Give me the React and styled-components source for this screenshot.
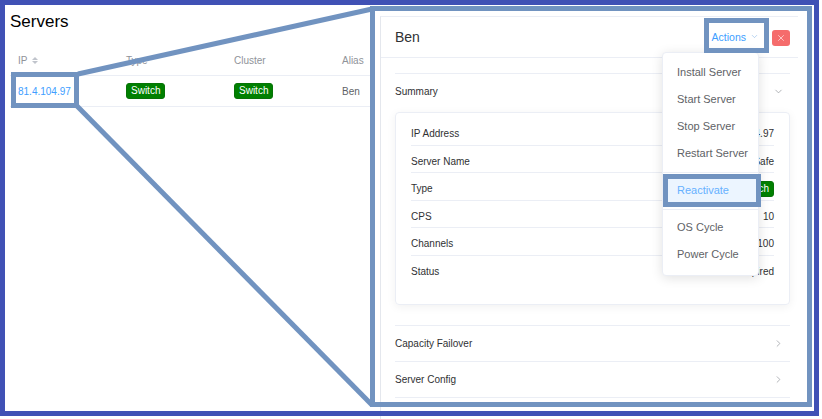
import React from 'react';
import styled, { createGlobalStyle } from 'styled-components';
import { ChevronDown, ChevronRight, X } from 'lucide-react';

const GlobalStyle = createGlobalStyle`
  html, body {
    margin: 0;
    padding: 0;
    background: #fff;
  }
  body {
    font-family: "Liberation Sans", Arial, sans-serif;
    color: #303133;
  }
`;

const Stage = styled.div`
  position: relative;
  width: 822px;
  height: 419px;
  overflow: hidden;
  background: #fff;
  display: flex;
`;

/* left page: server table */

const ListPane = styled.div`
  width: 370px;
  flex: none;
  overflow: hidden;
  padding: 12px 0 0 10px;
  box-sizing: border-box;
`;

const Title = styled.h2`
  margin: 0;
  font-size: 17px;
  line-height: 20px;
  font-weight: 400;
  color: #000;
`;

const Table = styled.div`
  margin-top: 13px;
  width: 440px;
`;

const TableRow = styled.div`
  display: grid;
  grid-template-columns: repeat(4, 108px);
  height: 30px;
  align-items: center;
  border-bottom: 1px solid #ebeef5;
  font-size: 10px;
  color: ${({ head }) => (head ? '#909399' : '#606266')};
`;

const Cell = styled.div`
  padding-left: 8px;
  display: flex;
  align-items: center;
  gap: 5px;
  color: ${({ link }) => (link ? '#409eff' : 'inherit')};
`;

const SortCaret = styled.span`
  display: inline-flex;
  flex-direction: column;
  gap: 1px;
  &::before,
  &::after {
    content: '';
    border-left: 3px solid transparent;
    border-right: 3px solid transparent;
  }
  &::before {
    border-bottom: 3px solid #c0c4cc;
  }
  &::after {
    border-top: 3px solid #c0c4cc;
  }
`;

const Tag = styled.span`
  display: inline-block;
  background: #008000;
  color: #fff;
  font-size: 10px;
  line-height: 14px;
  padding: 0 4px;
  border-radius: 3px;
  border: 1px solid #077307;
`;

/* right side: drawer */

const DrawerArea = styled.div`
  flex: 1;
  padding: 16px 0 0 10px;
`;

const Drawer = styled.div`
  width: 418px;
  height: 420px;
  border-left: 1px solid #e4e7ed;
  border-top: 1px solid #ebeef5;
  box-sizing: border-box;
  background: #fff;
`;

const DrawerHeader = styled.div`
  position: relative;
  height: 40px;
  display: flex;
  align-items: center;
  padding: 0 8px 0 14px;
  border-bottom: 1px solid #ebeef5;
`;

const DrawerTitle = styled.div`
  flex: 1;
  font-size: 14px;
  color: #303133;
`;

const ActionsButton = styled.div`
  display: flex;
  align-items: center;
  gap: 4px;
  color: #409eff;
  font-size: 10.5px;
  margin-right: 13px;
  margin-top: -1px;
  svg {
    color: #8cb8e8;
  }
`;

const CloseButton = styled.div`
  width: 18px;
  height: 16px;
  border-radius: 3px;
  background: #f56c6c;
  display: flex;
  align-items: center;
  justify-content: center;
  margin-top: 2px;
`;

const Menu = styled.div`
  position: absolute;
  top: 35px;
  left: 281px;
  width: 97px;
  box-sizing: border-box;
  padding: 6px 0 7px;
  background: #fff;
  border: 1px solid #ebeef5;
  border-radius: 4px;
  box-shadow: 0 2px 12px rgba(0, 0, 0, 0.12);
  z-index: 2;
`;

const MenuItem = styled.div`
  height: 27px;
  line-height: 27px;
  padding-left: 14px;
  font-size: 11px;
  color: ${({ active }) => (active ? '#66b1ff' : '#606266')};
  background: ${({ active }) => (active ? '#ecf5ff' : 'transparent')};
  white-space: nowrap;
`;

const MenuDivider = styled.div`
  height: 1px;
  background: #ebeef5;
  margin: 5px 0 4px;
`;

const DrawerBody = styled.div`
  padding: 15px 8px 0 14px;
`;

const CollapseItem = styled.div`
  border-top: 1px solid #ebeef5;
  &:last-child {
    border-bottom: 1px solid #ebeef5;
  }
`;

const CollapseHead = styled.div`
  height: 35px;
  display: flex;
  align-items: center;
  justify-content: space-between;
  font-size: 10px;
  color: #303133;
  padding-right: 6px;
  svg {
    color: #909399;
  }
`;

const CollapseContent = styled.div`
  padding: 3px 0 20px;
`;

const Card = styled.div`
  border: 1px solid #ebeef5;
  border-radius: 4px;
  box-shadow: 0 2px 10px rgba(0, 0, 0, 0.06);
  padding: 5px 15px 0;
  height: 193px;
  box-sizing: border-box;
`;

const InfoRow = styled.div`
  display: flex;
  justify-content: space-between;
  align-items: center;
  height: 27.5px;
  padding-top: 5px;
  box-sizing: border-box;
  font-size: 10px;
  color: #303133;
  border-bottom: 1px solid #ebeef5;
  &:last-child {
    border-bottom: none;
  }
`;

const info = [
  ['IP Address', '81.4.104.97'],
  ['Server Name', 'Ben-Safe'],
  ['Type', <Tag key="t">Switch</Tag>],
  ['CPS', '10'],
  ['Channels', '100'],
  ['Status', 'Expired'],
];

const menu = [
  { label: 'Install Server' },
  { label: 'Start Server' },
  { label: 'Stop Server' },
  { label: 'Restart Server' },
  { divider: true },
  { label: 'Reactivate', active: true },
  { divider: true },
  { label: 'OS Cycle' },
  { label: 'Power Cycle' },
];

/* annotation layer drawn over the screenshot */

const Annotations = styled.svg`
  position: absolute;
  top: 0;
  left: 0;
  pointer-events: none;
  z-index: 5;
`;

const callout = '#7193c0';

export default function App() {
  return (
    <>
      <GlobalStyle />
      <Stage>
        <ListPane>
          <Title>Servers</Title>
          <Table>
            <TableRow head>
              <Cell>
                IP <SortCaret />
              </Cell>
              <Cell>Type</Cell>
              <Cell>Cluster</Cell>
              <Cell>Alias</Cell>
            </TableRow>
            <TableRow>
              <Cell link>81.4.104.97</Cell>
              <Cell>
                <Tag>Switch</Tag>
              </Cell>
              <Cell>
                <Tag>Switch</Tag>
              </Cell>
              <Cell>Ben</Cell>
            </TableRow>
          </Table>
        </ListPane>

        <DrawerArea>
          <Drawer>
            <DrawerHeader>
              <DrawerTitle>Ben</DrawerTitle>
              <ActionsButton>
                Actions <ChevronDown size={9} strokeWidth={1.6} />
              </ActionsButton>
              <CloseButton>
                <X size={10} color="#fde2e2" strokeWidth={1.8} />
              </CloseButton>
              <Menu>
                {menu.map((m, i) =>
                  m.divider ? (
                    <MenuDivider key={i} />
                  ) : (
                    <MenuItem key={i} active={m.active}>
                      {m.label}
                    </MenuItem>
                  )
                )}
              </Menu>
            </DrawerHeader>
            <DrawerBody>
              <CollapseItem>
                <CollapseHead>
                  Summary <ChevronDown size={11} strokeWidth={1.5} />
                </CollapseHead>
                <CollapseContent>
                  <Card>
                    {info.map(([label, value]) => (
                      <InfoRow key={label}>
                        <span>{label}</span>
                        <span>{value}</span>
                      </InfoRow>
                    ))}
                  </Card>
                </CollapseContent>
              </CollapseItem>
              <CollapseItem>
                <CollapseHead>
                  Capacity Failover <ChevronRight size={11} strokeWidth={1.5} />
                </CollapseHead>
              </CollapseItem>
              <CollapseItem>
                <CollapseHead>
                  Server Config <ChevronRight size={11} strokeWidth={1.5} />
                </CollapseHead>
              </CollapseItem>
            </DrawerBody>
          </Drawer>
        </DrawerArea>

        <Annotations width="822" height="419" viewBox="0 0 822 419">
          <rect x="2.5" y="2.5" width="814" height="411" fill="none" stroke="#4051b5" strokeWidth="5" />
          <line x1="78" y1="74" x2="372" y2="9" stroke={callout} strokeWidth="5" />
          <line x1="77" y1="106" x2="372" y2="405" stroke={callout} strokeWidth="5" />
          <rect x="372.5" y="8.5" width="437" height="396" fill="none" stroke={callout} strokeWidth="5" />
          <rect x="13.5" y="74.5" width="63" height="31" fill="none" stroke={callout} strokeWidth="5" />
          <rect x="706.5" y="20.5" width="60" height="30" fill="none" stroke={callout} strokeWidth="5" />
          <rect x="665.5" y="176.5" width="93" height="28" fill="none" stroke={callout} strokeWidth="5" />
        </Annotations>
      </Stage>
    </>
  );
}
